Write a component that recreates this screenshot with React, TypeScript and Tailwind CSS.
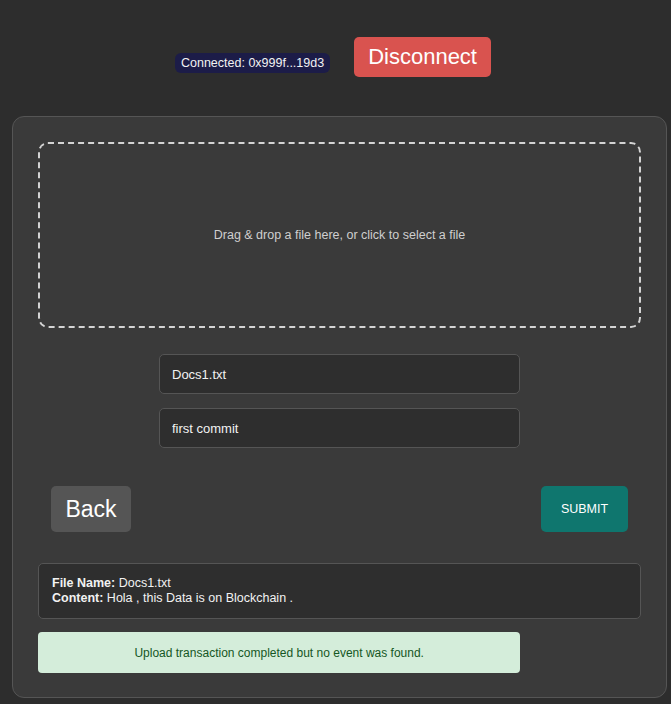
import React from 'react';

export default function App() {
  return (
    <div className="min-h-[704px] bg-[#2d2d2d] pb-[7px] font-['Liberation_Sans',Arial,sans-serif] text-white">
      {/* wallet header */}
      <div className="flex justify-center gap-[24px] pr-[5px] pt-[37px]">
        <span className="mt-[16px] h-[20px] rounded-[6px] bg-[#1c1c48] px-[6px] text-[12.5px] leading-[20px] text-[#f2f2f2]">
          Connected: 0x999f...19d3
        </span>
        <button className="h-[40px] rounded-[5px] bg-[#d9534f] px-[14px] text-[22px] leading-[40px] text-white">
          Disconnect
        </button>
      </div>

      <div className="ml-[12px] mt-[39px] flex w-[655px] flex-col rounded-[12px] border border-[#555] bg-[#3a3a3a] px-[25px] pb-[24px] pt-[25px]">
        <div className="flex h-[186px] items-center justify-center rounded-[10px] border-2 border-dashed border-[#d4d4d4] text-[12.5px] text-[#cfcfcf]">
          Drag &amp; drop a file here, or click to select a file
        </div>

        <div className="mx-auto mt-[26px] flex w-[361px] flex-col gap-[14px]">
          <input
            readOnly
            value="Docs1.txt"
            className="h-[40px] rounded-[5px] border border-[#555] bg-[#2e2e2e] pl-[12px] text-[13px] text-[#f2f2f2] outline-none"
          />
          <input
            readOnly
            value="first commit"
            className="h-[40px] rounded-[5px] border border-[#555] bg-[#2e2e2e] pl-[12px] text-[13px] text-[#f2f2f2] outline-none"
          />
        </div>

        <div className="mt-[38px] flex justify-between px-[13px]">
          <button className="h-[46px] w-[80px] rounded-[5px] bg-[#555] text-[23px] text-white">
            Back
          </button>
          <button className="h-[46px] w-[87px] rounded-[5px] bg-[#0f766e] text-[12.5px] text-white">
            SUBMIT
          </button>
        </div>

        <div className="mt-[31px] rounded-[5px] border border-[#555] bg-[#2e2e2e] px-[13px] pb-[12px] pt-[12px] text-[12.5px] leading-[15px] text-[#f2f2f2]">
          <div>
            <b>File Name:</b> Docs1.txt
          </div>
          <div>
            <b>Content:</b> Hola , this Data is on Blockchain .
          </div>
        </div>

        <div className="mt-[13px] flex h-[41px] w-4/5 items-center justify-center rounded-[4px] bg-[#d4edda] text-[12px] text-[#155724]">
          Upload transaction completed but no event was found.
        </div>
      </div>
    </div>
  );
}
